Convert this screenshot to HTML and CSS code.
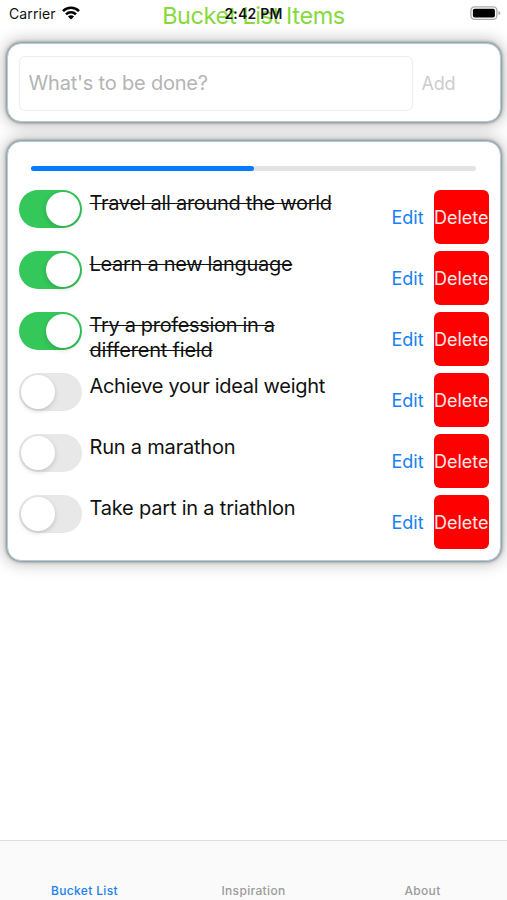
FILE: index.html
```html
<!DOCTYPE html>
<html lang="en">
<head>
<meta charset="utf-8">
<title>Bucket List Items</title>
<link rel="stylesheet" href="styles.css">
</head>
<body>
<div class="app">
  <header class="header">
    <h1 class="title">Bucket List Items</h1>
    <div class="status">
      <span class="carrier">Carrier</span>
      <svg class="wifi" viewBox="0 0 18 14" width="18" height="14">
        <g fill="none" stroke="#000" stroke-width="2.5">
          <path d="M1 5.200C5.400.7 12.600.7 17 5.200"/>
          <path d="M4 8.300C6.800 5.500 11.200 5.500 14 8.300"/>
        </g>
        <path d="M9 13.500L5.900 10.400Q9 7.900 12.100 10.400Z"/>
      </svg>
      <span class="time">2:42 PM</span>
      <svg class="battery" viewBox="0 0 31 14" width="31" height="14">
        <rect x="0.900" y="0.900" width="26" height="12.400" rx="3.500" fill="#fff" stroke="#aaa" stroke-width="1.300"/>
        <rect x="2.900" y="2.700" width="22" height="8.800" rx="1.800"/>
        <path d="M28.500 4.900Q30.500 5.700 30.500 7.100T28.500 9.300Z" fill="#aaa"/>
      </svg>
    </div>
  </header>
  <main>
    <form class="card entry">
      <input class="field" type="text" placeholder="What's to be done?">
      <button class="add" type="button" disabled>Add</button>
    </form>
    <section class="card list">
      <div class="progress"><div class="bar"></div></div>
      <ul class="items">
        <li class="item done"><span class="switch"></span><span class="label">Travel all around the world</span><span class="edit">Edit</span><span class="delete">Delete</span></li>
        <li class="item done"><span class="switch"></span><span class="label">Learn a new language</span><span class="edit">Edit</span><span class="delete">Delete</span></li>
        <li class="item done"><span class="switch"></span><span class="label snug">Try a profession in a<br><span class="loose">different field</span></span><span class="edit">Edit</span><span class="delete">Delete</span></li>
        <li class="item"><span class="switch"></span><span class="label">Achieve your ideal weight</span><span class="edit">Edit</span><span class="delete">Delete</span></li>
        <li class="item"><span class="switch"></span><span class="label loose">Run a marathon</span><span class="edit">Edit</span><span class="delete">Delete</span></li>
        <li class="item"><span class="switch"></span><span class="label loose">Take part in a triathlon</span><span class="edit">Edit</span><span class="delete">Delete</span></li>
      </ul>
    </section>
  </main>
  <nav class="tabs">
    <span class="tab active">Bucket List</span>
    <span class="tab">Inspiration</span>
    <span class="tab">About</span>
  </nav>
</div>
</body>
</html>
```
FILE: styles.css
```css
* { box-sizing: border-box; }
body {
  margin: 0;
  background: #fff;
  color: #111;
  font-family: Inter, "Liberation Sans", sans-serif;
}
.app {
  display: flex;
  flex-direction: column;
  height: 900px;
  overflow: hidden;
}
.header {
  position: relative;
  height: 43px;
}
.title {
  margin: 0;
  padding-top: 2px;
  text-align: center;
  font-size: 23.500px;
  line-height: 28px;
  font-weight: 400;
  letter-spacing: -0.400px;
  color: #86d93b;
}
.status {
  position: absolute;
  inset: 0 0 auto;
  height: 27px;
  display: flex;
  align-items: center;
  padding: 0 6px 0 9px;
  font-size: 14px;
  color: #111;
}
.carrier { width: 53px; letter-spacing: 0.1px; }
.wifi { margin-top: -2px; }
.battery { margin: -1px 0 0 auto; }
.time {
  position: absolute;
  left: 0;
  right: 0;
  text-align: center;
  font-weight: 600;
  letter-spacing: 0.200px;
}
main { flex: 1; padding: 0 6px 0 7px; }
.card {
  background: #fff;
  border: 1px solid #a9cfdd;
  border-radius: 14px;
  box-shadow: 0 0 3px 1px rgba(50, 50, 60, 0.5), 0 0 15px 3px rgba(0, 0, 0, 0.25);
}
.entry {
  display: flex;
  align-items: center;
  height: 79px;
  padding: 1px 11px 0;
}
.field {
  width: 394px;
  height: 55px;
  border: 1px solid #ededed;
  border-radius: 6px;
  padding: 0 8.500px;
  background: #fff;
  font: 20px Inter, "Liberation Sans", sans-serif;
  letter-spacing: -0.200px;
}
.field::placeholder { color: #b4b4b4; opacity: 1; }
.add {
  margin-left: 8.500px;
  padding: 0;
  border: 0;
  background: none;
  font: 18px Inter, "Liberation Sans", sans-serif;
  letter-spacing: -0.200px;
  color: #ccc;
}
.list {
  height: 420px;
  margin-top: 19px;
  padding: 24px 11px 0;
}
.progress {
  height: 5px;
  margin: 0 13px 0 12px;
  border-radius: 3px;
  background: #e3e3e3;
}
.bar {
  width: 50%;
  height: 5px;
  border-radius: 3px;
  background: #067bff;
}
.items {
  display: flex;
  flex-direction: column;
  gap: 7px;
  margin: 19px 0 0;
  padding: 0;
  list-style: none;
}
.item {
  display: flex;
  height: 54px;
}
.switch {
  width: 63px;
  height: 38px;
  padding: 2px;
  border-radius: 19px;
  background: #e8e8e9;
}
.switch::before {
  content: "";
  display: block;
  width: 34px;
  height: 34px;
  border-radius: 50%;
  background: #fff;
  box-shadow: 0 2px 5px rgba(0, 0, 0, 0.16);
}
.done .switch { background: #34c759; }
.done .switch::before { margin-left: 25px; }
.label {
  width: 290px;
  margin-left: 7.500px;
  padding-top: 1px;
  font-size: 20px;
  line-height: 24.500px;
  letter-spacing: -0.300px;
  white-space: nowrap;
}
.snug { letter-spacing: -0.330px; }
.loose { letter-spacing: -0.200px; }
.done .label {
  text-decoration: line-through;
  text-decoration-thickness: 1.300px;
}
.edit, .delete {
  font-size: 18px;
  line-height: 56px;
}
.edit { width: 54px; padding-left: 12px; color: #1780f2; }
.delete {
  width: 55.500px;
  border-radius: 6px;
  background: #fe0000;
  color: #ffe9e9;
  text-align: center;
  white-space: nowrap;
}
.tabs {
  display: grid;
  grid-template-columns: repeat(3, 1fr);
  align-items: end;
  height: 60px;
  border-top: 1px solid #dedede;
  background: #fafafa;
  font-size: 12px;
  font-weight: 500;
  line-height: 15px;
  letter-spacing: 0.350px;
  text-align: center;
  color: #9b9b9b;
  padding-bottom: 2px;
}
.active { color: #2180ea; }
```
